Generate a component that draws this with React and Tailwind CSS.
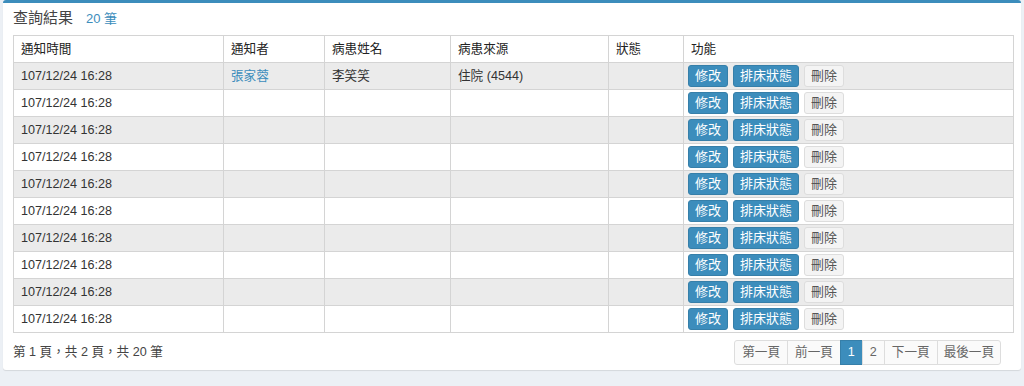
const font = { fontFamily: '"Liberation Sans", "Noto Sans CJK TC", sans-serif' }

const rows = Array.from({ length: 10 }, (_, i) =>
  i === 0
    ? { time: '107/12/24 16:28', by: '張家蓉', name: '李笑笑', src: '住院 (4544)', status: '' }
    : { time: '107/12/24 16:28', by: '', name: '', src: '', status: '' }
)

const cols = [210, 101, 126, 158, 75, 330]

function Pager() {
  const items = ['第一頁', '前一頁', '1', '2', '下一頁', '最後一頁']
  return (
    <div className="flex">
      {items.map((t, i) => (
        <span
          key={t}
          className={
            t === '1'
              ? 'h-[25px] px-[7px] flex items-center bg-[#3c8dbc] border border-[#367fa9] text-white -ml-px'
              : i === 0
              ? 'h-[25px] px-[7px] flex items-center bg-[#fafafa] border border-[#ddd] text-[#666] rounded-l-[3px]'
              : i === items.length - 1
              ? 'h-[25px] px-[6px] flex items-center bg-[#fafafa] border border-[#ddd] text-[#666] rounded-r-[3px] -ml-px'
              : 'h-[25px] px-[7px] flex items-center bg-[#fafafa] border border-[#ddd] text-[#666] -ml-px'
          }
        >
          {t}
        </span>
      ))}
    </div>
  )
}

export default function App() {
  return (
    <div className="w-[1024px] h-[386px] bg-[#ecf0f5]" style={font}>
      <div className="ml-[3px] w-[1018px] bg-white border-t-[3px] border-[#3c8dbc] rounded-[3px] shadow-[0_1px_1px_rgba(0,0,0,0.1)] pl-[10px] pr-[8px] pb-[5px] text-[12.6px] text-[#333]">
        <div className="h-[32px] flex items-center pb-[1px]">
          <span className="text-[15px] text-[#444]">查詢結果</span>
          <span className="ml-[13px] text-[13px] text-[#3c8dbc]">20 筆</span>
        </div>

        <table className="w-[1000px] border-collapse table-fixed">
          <colgroup>
            {cols.map((w, i) => (
              <col key={i} style={{ width: w }} />
            ))}
          </colgroup>
          <thead>
            <tr className="h-[27px]">
              {['通知時間', '通知者', '病患姓名', '病患來源', '狀態', '功能'].map(h => (
                <th key={h} className="border border-[#d4d4d4] px-[7px] text-left font-normal text-[#222]">
                  {h}
                </th>
              ))}
            </tr>
          </thead>
          <tbody>
            {rows.map((r, i) => (
              <tr key={i} className={i % 2 === 0 ? 'h-[27px] bg-[#ebebeb]' : 'h-[27px] bg-white'}>
                <td className="border border-[#d4d4d4] px-[7px]">{r.time}</td>
                <td className="border border-[#d4d4d4] px-[7px] text-[#3c8dbc]">{r.by}</td>
                <td className="border border-[#d4d4d4] px-[7px]">{r.name}</td>
                <td className="border border-[#d4d4d4] px-[7px]">{r.src}</td>
                <td className="border border-[#d4d4d4] px-[7px]">{r.status}</td>
                <td className="border border-[#d4d4d4] px-[4px] py-0">
                  <div className="flex gap-[5px] text-[13px]">
                    <span className="h-[22px] w-[40px] flex items-center justify-center bg-[#3c8dbc] border border-[#367fa9] rounded-[3px] text-white">修改</span>
                    <span className="h-[22px] w-[66px] flex items-center justify-center bg-[#3c8dbc] border border-[#367fa9] rounded-[3px] text-white">排床狀態</span>
                    <span className="h-[22px] w-[40px] flex items-center justify-center bg-[#f4f4f4] border border-[#ddd] rounded-[3px] text-[#555]">刪除</span>
                  </div>
                </td>
              </tr>
            ))}
          </tbody>
        </table>

        <div className="flex items-center justify-between mt-[7px] pr-[12px]">
          <span className="text-[#444]">第 1 頁，共 2 頁，共 20 筆</span>
          <Pager />
        </div>
      </div>
    </div>
  )
}
